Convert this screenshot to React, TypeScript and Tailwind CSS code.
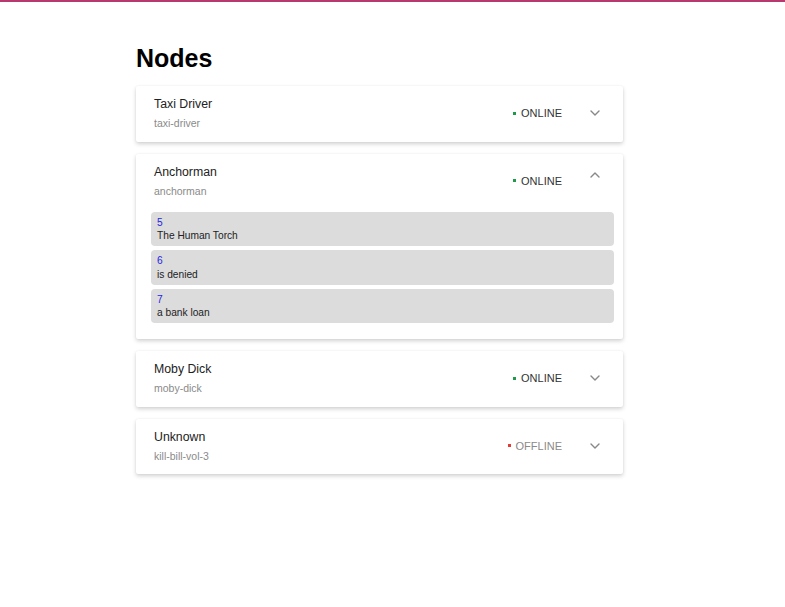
type Node = {
  name: string;
  slug: string;
  online: boolean;
  expanded?: boolean;
  items?: { id: number; text: string }[];
};

const nodes: Node[] = [
  { name: 'Taxi Driver', slug: 'taxi-driver', online: true },
  {
    name: 'Anchorman',
    slug: 'anchorman',
    online: true,
    expanded: true,
    items: [
      { id: 5, text: 'The Human Torch' },
      { id: 6, text: 'is denied' },
      { id: 7, text: 'a bank loan' },
    ],
  },
  { name: 'Moby Dick', slug: 'moby-dick', online: true },
  { name: 'Unknown', slug: 'kill-bill-vol-3', online: false },
];

function Chevron({ up }: { up?: boolean }) {
  return (
    <svg width="10" height="6" viewBox="0 0 10 6" className={up ? 'rotate-180 -translate-y-[6px]' : ''}>
      <path d="M1 1l4 4 4-4" fill="none" stroke="#888" strokeWidth="1.4" strokeLinecap="round" strokeLinejoin="round" />
    </svg>
  );
}

function NodeCard({ node }: { node: Node }) {
  return (
    <div className="bg-white rounded-[2px] shadow-[0_2px_4px_rgba(0,0,0,0.18),0_0_2px_rgba(0,0,0,0.06)]">
      <div className="flex items-center pl-[18px] pr-[23px] pt-[10px] pb-[11.5px]">
        <div className="flex-1">
          <div className="text-[12.3px] leading-[16px] text-[#222]">{node.name}</div>
          <div className="mt-[4px] text-[10.5px] leading-[14px] text-[#8a8a8a]">{node.slug}</div>
        </div>
        <div className="flex items-center gap-[5px] text-[11px] leading-[14px]">
          <span className={`w-[3px] h-[3px] ${node.online ? 'bg-[#1f9a4a]' : 'bg-[#e53935]'}`} />
          <span className={node.online ? 'text-[#333]' : 'text-[#8a8a8a]'}>{node.online ? 'ONLINE' : 'OFFLINE'}</span>
        </div>
        <div className="ml-[28px] flex items-center">
          <Chevron up={node.expanded} />
        </div>
      </div>
      {node.expanded && node.items && (
        <div className="flex flex-col gap-[4px] pl-[15px] pr-[9px] pt-[3px] pb-[16px]">
          {node.items.map((it) => (
            <div key={it.id} className="bg-[#dcdcdc] rounded-[4px] px-[6px] py-[4px] text-[10.2px] leading-[13.2px]">
              <div className="text-[#2424e6]">{it.id}</div>
              <div className="text-[#222]">{it.text}</div>
            </div>
          ))}
        </div>
      )}
    </div>
  );
}

export default function App() {
  return (
    <div className="min-h-[607px] bg-white border-t-2 border-[#b8396e] font-['Liberation_Sans',Arial,sans-serif]">
      <div className="pl-[136px] pt-[41px]">
        <div className="w-[487px]">
          <h1 className="text-[25px] leading-[30px] font-bold text-black">Nodes</h1>
          <div className="mt-[13px] flex flex-col gap-[12px]">
            {nodes.map((n) => (
              <NodeCard key={n.slug} node={n} />
            ))}
          </div>
        </div>
      </div>
    </div>
  );
}
